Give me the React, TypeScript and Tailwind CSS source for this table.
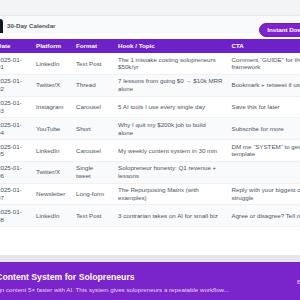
import React from "react";

type Row = {
  date: string;
  platform: string;
  format: string;
  hook: React.ReactNode;
  cta: string;
};

const rows: Row[] = [
  { date: "2025-01-01", platform: "LinkedIn", format: "Text Post", hook: "The 1 mistake costing solopreneurs $50k/yr", cta: "Comment \u201CGUIDE\u201D for the framework" },
  {
    date: "2025-01-02",
    platform: "Twitter/X",
    format: "Thread",
    hook: (
      <>
        <span className="whitespace-nowrap">7 lessons from going $0 {"\u2192"} $10k MRR</span> alone
      </>
    ),
    cta: "Bookmark + retweet if useful",
  },
  { date: "2025-01-03", platform: "Instagram", format: "Carousel", hook: "5 AI tools I use every single day", cta: "Save this for later" },
  { date: "2025-01-04", platform: "YouTube", format: "Short", hook: "Why I quit my $200k job to build alone", cta: "Subscribe for more" },
  { date: "2025-01-05", platform: "LinkedIn", format: "Carousel", hook: "My weekly content system in 30 min", cta: "DM me \u201CSYSTEM\u201D to get the template" },
  { date: "2025-01-06", platform: "Twitter/X", format: "Single tweet", hook: "Solopreneur honesty: Q1 revenue + lessons", cta: "" },
  { date: "2025-01-07", platform: "Newsletter", format: "Long-form", hook: "The Repurposing Matrix (with examples)", cta: "Reply with your biggest content struggle" },
  { date: "2025-01-08", platform: "LinkedIn", format: "Text Post", hook: "3 contrarian takes on AI for small biz", cta: "Agree or disagree? Tell me why" },
];

function DateCell({ value }: { value: string }) {
  return (
    <>
      {value.slice(0, 8)}
      <wbr />
      {value.slice(8)}
    </>
  );
}

const th = "px-[5px] py-[3.125px] text-left font-bold text-white";
const td = "px-[5px] py-[2.625px] align-middle";

export default function App() {
  return (
    <div className="w-[300px] h-[300px] overflow-hidden bg-white font-['Liberation_Sans',Arial,sans-serif] text-[6.2px] leading-[7.75px]">
      <div className="-ml-[8px] w-[340px]">
        <div className="h-[16px] bg-[#f3f4f6] border-b border-[#e6e8ec]" />

        <div className="flex h-[17px] items-start bg-[#f8f9fa]">
          <div className="mt-[3px] h-[14px] w-[10.7px] shrink-0 overflow-hidden rounded-tr-[3px] bg-[#111827]" />
          <div className="mt-[3px] flex h-[14px] w-[256.6px] shrink-0 items-center pl-[4.3px] font-bold text-[#4b5563]">
            30-Day Calendar
          </div>
          <div className="mt-[7.3px] flex h-[13.4px] shrink-0 items-center rounded-full border-[0.5px] border-[#6b21a8] bg-[#7e22ce] px-[7px] font-bold whitespace-nowrap text-white">
            Instant Download
          </div>
        </div>

        <div className="h-[6px]" />

        <table className="w-[336.5px] table-fixed border-collapse text-[#4b5563]">
          <colgroup>
            <col className="w-[39px]" />
            <col className="w-[40px]" />
            <col className="w-[42px]" />
            <col className="w-[113.5px]" />
            <col className="w-[102px]" />
          </colgroup>
          <thead>
            <tr className="bg-[#6d22c8]">
              <th className={th}>Date</th>
              <th className={th}>Platform</th>
              <th className={th}>Format</th>
              <th className={th}>Hook / Topic</th>
              <th className={th}>CTA</th>
            </tr>
          </thead>
          <tbody>
            {rows.map((r, i) => (
              <tr
                key={r.date}
                className={
                  i % 2 === 1
                    ? "bg-[#f9fafb] border-b border-[#eef0f3]"
                    : "bg-white border-b border-[#eef0f3]"
                }
              >
                <td className={td}>
                  <DateCell value={r.date} />
                </td>
                <td className={td}>{r.platform}</td>
                <td className={td}>{r.format}</td>
                <td className={td}>{r.hook}</td>
                <td className={td}>{r.cta}</td>
              </tr>
            ))}
          </tbody>
        </table>

        <div className="h-[28px]" />
        <div className="h-[7px] bg-[#e5e7eb]" />
      </div>

      <div className="-ml-[15px] flex h-[60px] w-[360px] items-start bg-[#7a24cc] pt-[9.5px]">
        <div className="w-[312px] shrink-0">
          <div className="text-[8.7px] leading-[11px] font-bold whitespace-nowrap text-white">
            AI Content System for Solopreneurs
          </div>
          <div className="mt-[3.1px] whitespace-nowrap text-[#e9d5ff]">
            Design content 5× faster with AI. This system gives solopreneurs a repeatable workflow...
          </div>
        </div>
        <div className="mt-[6.5px] font-bold whitespace-nowrap text-[#d8b4fe]">Buy Now</div>
      </div>
    </div>
  );
}
